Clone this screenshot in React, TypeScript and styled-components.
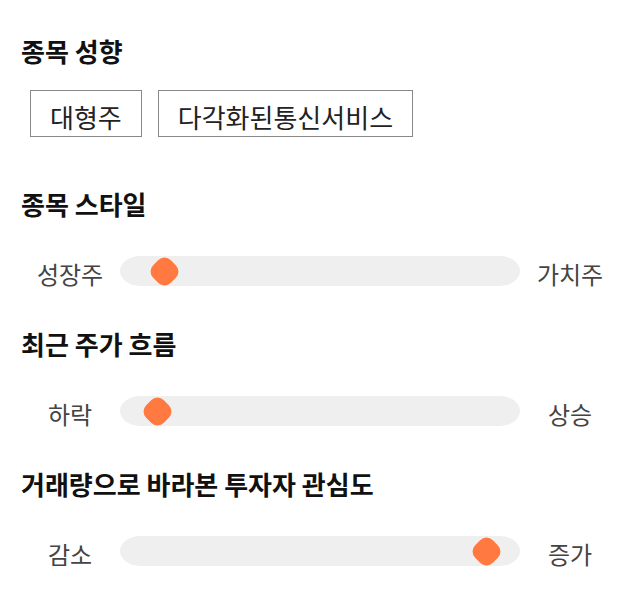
import styled, { createGlobalStyle } from 'styled-components';

const GlobalStyle = createGlobalStyle`
  body {
    margin: 0;
    background: #fff;
    font-family: 'Noto Sans CJK KR', 'Noto Sans', sans-serif;
  }
`;

interface SliderItem {
  title: string;
  left: string;
  right: string;
  value: number;
}

const tags = ['대형주', '다각화된통신서비스'];

const sliders: SliderItem[] = [
  { title: '종목 스타일', left: '성장주', right: '가치주', value: 8 },
  { title: '최근 주가 흐름', left: '하락', right: '상승', value: 6.2 },
  { title: '거래량으로 바라본 투자자 관심도', left: '감소', right: '증가', value: 94.9 },
];

const App = () => {
  return (
    <>
      <GlobalStyle />
      <Page>
        <Section>
          <Title>종목 성향</Title>
          <Tags>
            {tags.map((tag) => (
              <Tag key={tag}>{tag}</Tag>
            ))}
          </Tags>
        </Section>
        {sliders.map((item) => (
          <Section key={item.title}>
            <Title>{item.title}</Title>
            <SliderRow>
              <SideLabel>{item.left}</SideLabel>
              <Track>
                <Thumb $value={item.value} />
              </Track>
              <SideLabel>{item.right}</SideLabel>
            </SliderRow>
          </Section>
        ))}
      </Page>
    </>
  );
};

const Page = styled.main`
  display: flex;
  flex-direction: column;
  gap: 40px;
  width: 640px;
  padding: 36px 0 0;
  box-sizing: border-box;
`;

const Section = styled.section`
  display: flex;
  flex-direction: column;
`;

const Title = styled.h2`
  margin: 0 0 0 21px;
  font-size: 26px;
  line-height: 30px;
  font-weight: 700;
  color: #111;
`;

const Tags = styled.ul`
  display: flex;
  gap: 16px;
  margin: 24px 0 12px;
  padding: 0 0 0 30px;
  list-style: none;
`;

const Tag = styled.li`
  display: flex;
  align-items: center;
  justify-content: center;
  height: 47px;
  padding: 5px 19px 0;
  box-sizing: border-box;
  border: 1px solid #888;
  font-size: 26px;
  color: #222;
`;

const SliderRow = styled.div`
  display: flex;
  align-items: center;
  margin-top: 34px;
  padding: 0 20px;
`;

const SideLabel = styled.span`
  width: 100px;
  text-align: center;
  font-size: 24px;
  line-height: 30px;
  padding-top: 6px;
  color: #444;
`;

const Track = styled.div`
  position: relative;
  flex: 1;
  height: 30px;
  background: #efefef;
  border-radius: 20px / 15px;
`;

const Thumb = styled.div<{ $value: number }>`
  position: absolute;
  top: 1px;
  left: calc((100% - 29px) * ${({ $value }) => $value / 100});
  width: 29px;
  height: 29px;
  display: flex;
  align-items: center;
  justify-content: center;

  &::before {
    content: '';
    width: 25px;
    height: 25px;
    background: #ff7940;
    border-radius: 9px;
    transform: rotate(45deg);
  }
`;

export default App;
